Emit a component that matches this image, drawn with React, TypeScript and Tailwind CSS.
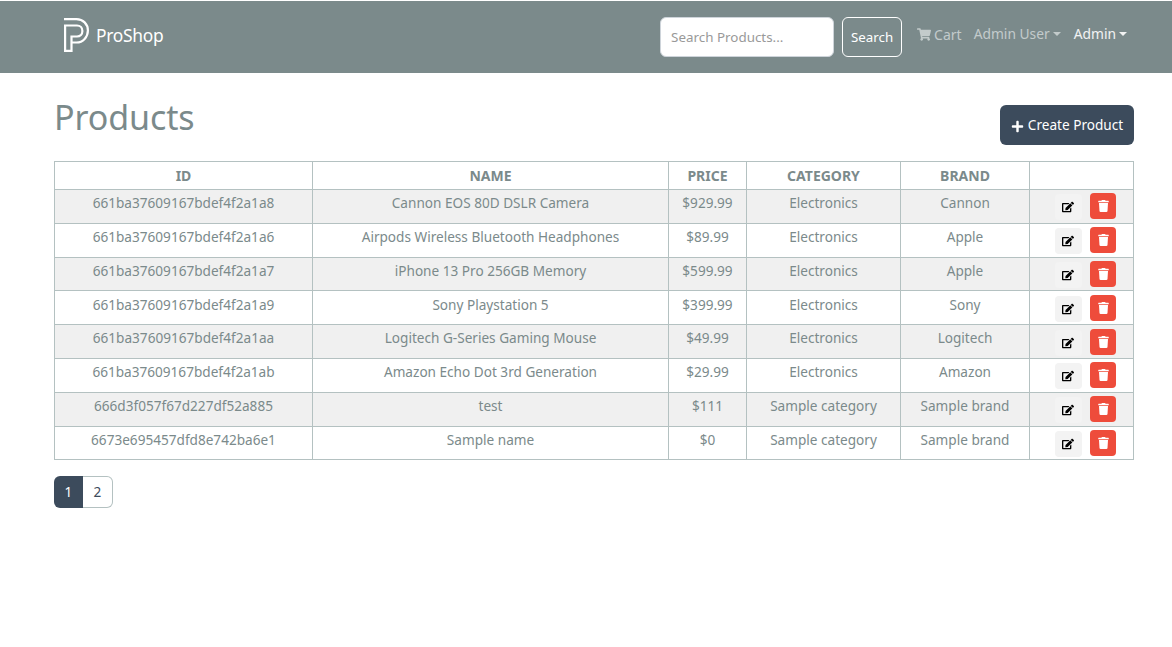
import { FaEdit, FaPlus, FaShoppingCart, FaTrash } from 'react-icons/fa';

const products = [
  { id: '661ba37609167bdef4f2a1a8', name: 'Cannon EOS 80D DSLR Camera', price: '$929.99', category: 'Electronics', brand: 'Cannon' },
  { id: '661ba37609167bdef4f2a1a6', name: 'Airpods Wireless Bluetooth Headphones', price: '$89.99', category: 'Electronics', brand: 'Apple' },
  { id: '661ba37609167bdef4f2a1a7', name: 'iPhone 13 Pro 256GB Memory', price: '$599.99', category: 'Electronics', brand: 'Apple' },
  { id: '661ba37609167bdef4f2a1a9', name: 'Sony Playstation 5', price: '$399.99', category: 'Electronics', brand: 'Sony' },
  { id: '661ba37609167bdef4f2a1aa', name: 'Logitech G-Series Gaming Mouse', price: '$49.99', category: 'Electronics', brand: 'Logitech' },
  { id: '661ba37609167bdef4f2a1ab', name: 'Amazon Echo Dot 3rd Generation', price: '$29.99', category: 'Electronics', brand: 'Amazon' },
  { id: '666d3f057f67d227df52a885', name: 'test', price: '$111', category: 'Sample category', brand: 'Sample brand' },
  { id: '6673e695457dfd8e742ba6e1', name: 'Sample name', price: '$0', category: 'Sample category', brand: 'Sample brand' },
];

function Logo() {
  return (
    <svg width="25" height="34" viewBox="0 0 25 34" fill="none" stroke="white" strokeWidth="2.2" className="shrink-0">
      <path d="M0 1.100H12.500C19 1.100 23.900 6 23.900 12.500C23.900 19 19 24.500 12.500 24.500H8" />
      <path d="M1.100 7.500H13C16.200 7.500 18.400 10 18.400 13C18.400 16 16.200 18.500 13 18.500H7.500V32.900H1.100V7.500Z" />
    </svg>
  );
}

export default function App() {
  return (
    <div className="min-h-[647px] bg-white text-[14px] text-[#7b8a8b] font-['Noto_Sans','Open_Sans',sans-serif]">
      {/* Header */}
      <header className="mt-px h-[72px] bg-[#7b8a8b] flex items-center pl-[64px] pr-[45px]">
        <a className="-mt-[4px] flex items-center gap-[7px] text-white text-[17.4px] tracking-[-0.3px]">
          <Logo />
          ProShop
        </a>
        <div className="ml-auto flex items-center">
          <input
            placeholder="Search Products..."
            className="w-[174px] h-[40px] rounded-[6px] border border-[#ced4da] bg-white px-[10px] text-[13.4px] outline-none placeholder:text-[#999]"
          />
          <button className="ml-[8px] h-[40px] w-[60px] rounded-[6px] border border-white pt-[1px] text-white text-[13.3px]">Search</button>
          <a className="ml-[15px] -mt-[6px] flex items-center gap-[3px] text-[#c3cbcb]">
            <FaShoppingCart className="w-[14px] h-[13px]" />
            Cart
          </a>
          <a className="ml-[12px] -mt-[6px] flex items-center text-[13.8px] text-[#c3cbcb]">
            Admin User
            <span className="ml-[3px] border-x-[4px] border-t-[4px] border-x-transparent border-t-[#c3cbcb]" />
          </a>
          <a className="ml-[13px] -mt-[6px] flex items-center text-[13.8px] text-white/90">
            Admin
            <span className="ml-[3px] border-x-[4px] border-t-[4px] border-x-transparent border-t-white/90" />
          </a>
        </div>
      </header>

      <main className="px-[54px] pr-[38px]">
        <div className="flex items-start justify-between h-[88px]">
          <h1 className="mt-[20px] text-[34px] leading-[48px] tracking-[-0.1px]">Products</h1>
          <button className="mt-[32px] h-[40px] w-[134px] rounded-[6px] bg-[#3c4b5c] pt-[1px] text-white text-[13.6px] flex items-center justify-center gap-[4px]">
            <FaPlus className="w-[13px] h-[13px] mt-[2px]" />
            Create Product
          </button>
        </div>

        {/* Products table */}
        <table className="w-[1079px] table-fixed border-collapse text-[13.6px] text-center">
          <colgroup>
            <col className="w-[258px]" />
            <col className="w-[356px]" />
            <col className="w-[78px]" />
            <col className="w-[154px]" />
            <col className="w-[129px]" />
            <col className="w-[104px]" />
          </colgroup>
          <thead>
            <tr className="h-[28px] text-[14px]">
              {['ID', 'NAME', 'PRICE', 'CATEGORY', 'BRAND', ''].map((h, i) => (
                <th key={i} className="border border-[#b4c1c1] p-0 font-bold">{h}</th>
              ))}
            </tr>
          </thead>
          <tbody>
            {products.map((p, i) => (
              <tr key={p.id} className={i % 2 === 0 ? 'h-[33.8px] bg-[#f0f0f0]' : 'h-[33.8px] bg-white'}>
                <td className="border border-[#b4c1c1] p-0 pb-[6px]">{p.id}</td>
                <td className="border border-[#b4c1c1] p-0 pb-[6px]">{p.name}</td>
                <td className="border border-[#b4c1c1] p-0 pb-[6px]">{p.price}</td>
                <td className="border border-[#b4c1c1] p-0 pb-[6px]">{p.category}</td>
                <td className="border border-[#b4c1c1] p-0 pb-[6px]">{p.brand}</td>
                <td className="border border-[#b4c1c1] p-0">
                  <div className="flex items-center justify-end pr-[17px] gap-[8px]">
                    <button className="mt-[2px] w-[27px] h-[26px] rounded-[4px] bg-[#f3f3f3] flex items-center justify-center pr-[2px] text-black">
                      <FaEdit className="w-[12px] h-[12px]" />
                    </button>
                    <button className="w-[26px] h-[26px] rounded-[4px] bg-[#ee4c3b] flex items-center justify-center text-white">
                      <FaTrash className="w-[11px] h-[12px]" />
                    </button>
                  </div>
                </td>
              </tr>
            ))}
          </tbody>
        </table>

        {/* Pagination */}
        <nav className="mt-[16px] flex text-[13.6px]">
          <span className="w-[29px] h-[32px] rounded-l-[6px] bg-[#3c4b5c] text-white flex items-center justify-center">1</span>
          <span className="w-[30px] h-[32px] rounded-r-[6px] border border-l-0 border-[#b4c1c1] text-[#3c4b5c] flex items-center justify-center">2</span>
        </nav>
      </main>
    </div>
  );
}
